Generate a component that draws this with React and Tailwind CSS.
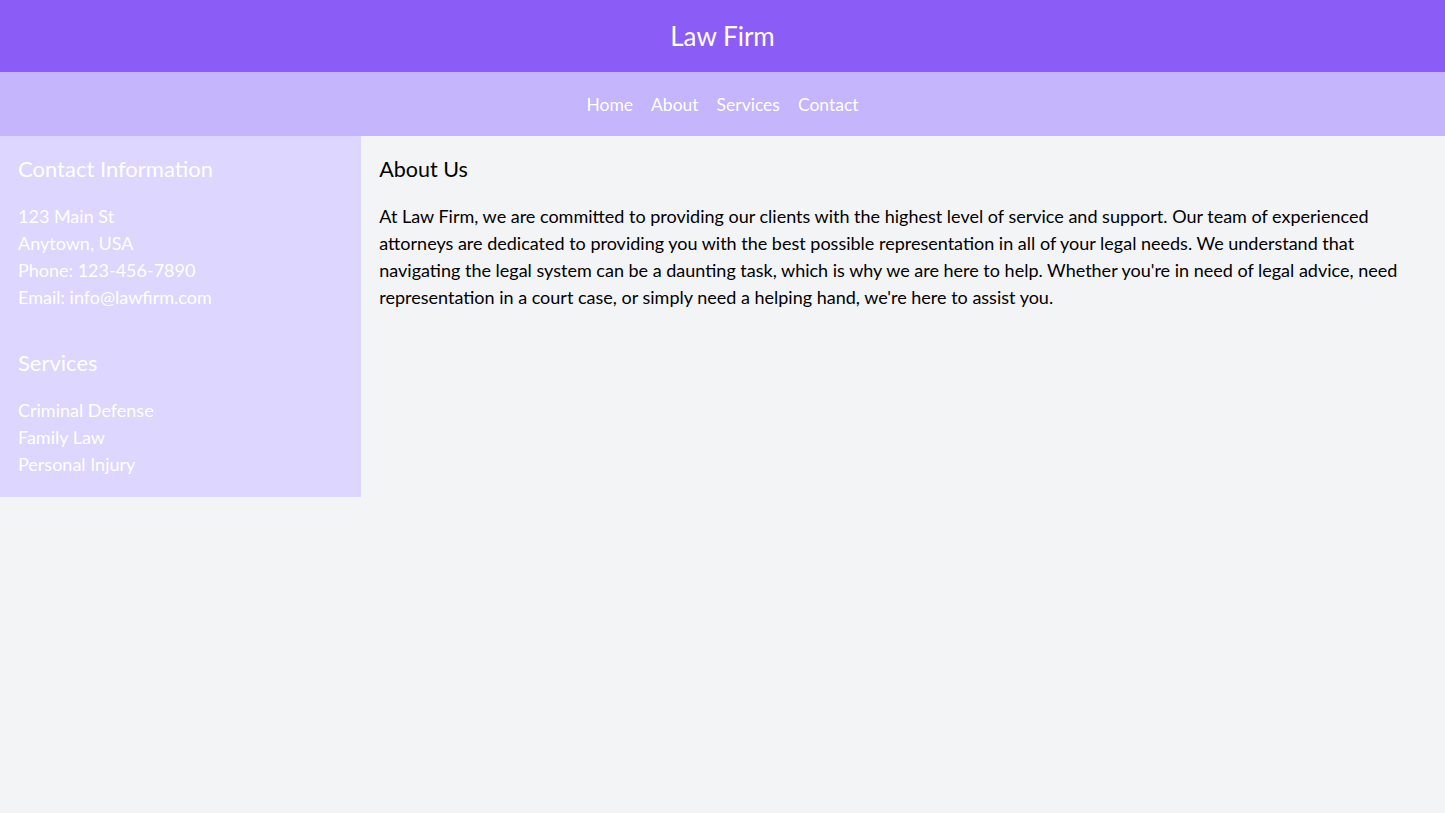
export default function App() {
  return (
    <div className="min-h-screen bg-[#f3f4f6] font-['Lato',sans-serif]">
      <header className="bg-[#8b5cf6] h-[72px] flex items-center justify-center">
        <h1 className="text-[26px] leading-[36px] text-white">Law Firm</h1>
      </header>
      <nav className="bg-[#c4b5fd] h-16 flex items-center justify-center">
        <ul className="flex gap-[18px] text-white text-[17.5px] leading-[27px]">
          <li>Home</li>
          <li>About</li>
          <li>Services</li>
          <li>Contact</li>
        </ul>
      </nav>
      <div className="flex items-start">
        <aside className="w-1/4 bg-[#ddd6fe] px-[18px] pt-4 pb-[19px] text-white text-[18px] leading-[27px]">
          <h2 className="text-[22px] leading-[34px] mb-[17px]">Contact Information</h2>
          <p>123 Main St</p>
          <p>Anytown, USA</p>
          <p>Phone: 123-456-7890</p>
          <p>Email: info@lawfirm.com</p>
          <h2 className="text-[22px] leading-[34px] mb-[17px] mt-[35px]">Services</h2>
          <ul>
            <li>Criminal Defense</li>
            <li>Family Law</li>
            <li>Personal Injury</li>
          </ul>
        </aside>
        <main className="flex-1 px-[18px] pt-4 text-black text-[18px] leading-[27px]">
          <h2 className="text-[21.5px] leading-[34px] mb-[17px]">About Us</h2>
          <p>
            At Law Firm, we are committed to providing our clients with the highest level of service and support. Our team of experienced attorneys are dedicated to providing you with the best possible representation in all of your legal needs. We understand that navigating the legal system can be a daunting task, which is why we are here to help. Whether you're in need of legal advice, need representation in a court case, or simply need a helping hand, we're here to assist you.
          </p>
        </main>
      </div>
    </div>
  );
}
